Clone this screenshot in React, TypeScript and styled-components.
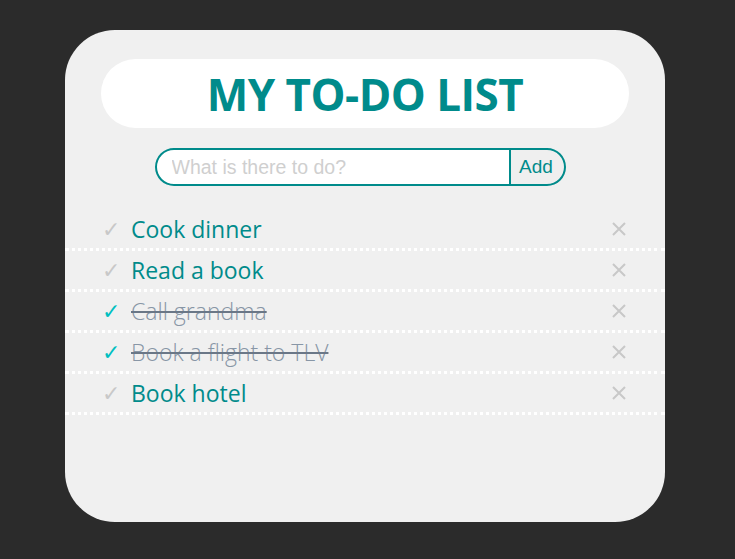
import styled, { createGlobalStyle } from "styled-components";

interface Todo {
    id: number;
    text: string;
    done: boolean;
}

const todos: Todo[] = [
    { id: 1, text: "Cook dinner", done: false },
    { id: 2, text: "Read a book", done: false },
    { id: 3, text: "Call grandma", done: true },
    { id: 4, text: "Book a flight to TLV", done: true },
    { id: 5, text: "Book hotel", done: false },
];

const App = () => {
    return (
        <>
            <GlobalStyle />
            <Card>
                <TitleBox>
                    <Title>MY TO-DO LIST</Title>
                </TitleBox>
                <Form onSubmit={(e) => e.preventDefault()}>
                    <Input placeholder="What is there to do?" />
                    <AddButton type="submit">Add</AddButton>
                </Form>
                <List>
                    {todos.map((todo) => (
                        <Item key={todo.id}>
                            <Check $done={todo.done}>✓</Check>
                            <ItemText $done={todo.done}>{todo.text}</ItemText>
                            <RemoveButton aria-label="remove">
                                <svg width="14" height="14" viewBox="0 0 14 14">
                                    <path d="M1 1 L13 13 M13 1 L1 13" stroke="#c8c8c8" strokeWidth="2" />
                                </svg>
                            </RemoveButton>
                        </Item>
                    ))}
                </List>
            </Card>
        </>
    );
};

export default App;

const GlobalStyle = createGlobalStyle`
    html, body {
        margin: 0;
        padding: 0;
        background-color: #2b2b2b;
        height: 559px;
        overflow: hidden;
    }
`

const Card = styled.div`
    box-sizing: border-box;
    width: 600px;
    height: 492px;
    margin: 30px 0 0 65px;
    padding-top: 29px;
    background-color: #f0f0f0;
    border-radius: 50px;
    font-family: "Open Sans", "Noto Sans", sans-serif;
`

const TitleBox = styled.div`
    height: 69px;
    margin: 0 36px;
    background-color: #fff;
    border-radius: 35px;
    display: flex;
    align-items: center;
    justify-content: center;
`

const Title = styled.h1`
    margin: 0;
    font-size: 44px;
    font-weight: 700;
    color: #008b8b;
    letter-spacing: -0.5px;
`

const Form = styled.form`
    display: flex;
    justify-content: center;
    margin-top: 20px;
    padding-right: 10px;
`

const Input = styled.input`
    box-sizing: border-box;
    width: 355px;
    height: 38px;
    padding: 0 15px;
    border: 2px solid #008b8b;
    border-right-width: 1px;
    border-radius: 19px 0 0 19px;
    background: #fff;
    font-family: "Liberation Sans", Arial, sans-serif;
    font-size: 19.5px;
    outline: none;
    &::placeholder {
        color: #cfcfcf;
    }
`

const AddButton = styled.button`
    box-sizing: border-box;
    width: 56px;
    height: 38px;
    padding: 0 8px 0 6px;
    border: 2px solid #008b8b;
    border-left-width: 1px;
    border-radius: 0 19px 19px 0;
    background: #efefef;
    color: #008b8b;
    font-family: "Liberation Sans", Arial, sans-serif;
    font-size: 19px;
    cursor: pointer;
`

const List = styled.ul`
    list-style: none;
    margin: 24px 0 0;
    padding: 0;
`

const Item = styled.li`
    display: flex;
    align-items: center;
    height: 38px;
    padding: 0 39px 0 37px;
    border-bottom: 3px dotted #fff;
`

const Check = styled.span<{ $done?: boolean }>`
    width: 29px;
    font-family: "DejaVu Sans", sans-serif;
    font-size: 22px;
    color: ${(props) => (props.$done ? "#00bfc0" : "#c8c8c8")};
`

const ItemText = styled.span<{ $done?: boolean }>`
    flex: 1;
    font-size: 23px;
    font-weight: ${(props) => (props.$done ? 300 : 400)};
    color: ${(props) => (props.$done ? "#8896a6" : "#008b8b")};
    text-decoration: ${(props) => (props.$done ? "line-through" : "none")};
    text-decoration-color: #6a7787;
    text-decoration-thickness: 2px;
`

const RemoveButton = styled.button`
    border: none;
    background: none;
    padding: 0;
    display: flex;
    cursor: pointer;
`
